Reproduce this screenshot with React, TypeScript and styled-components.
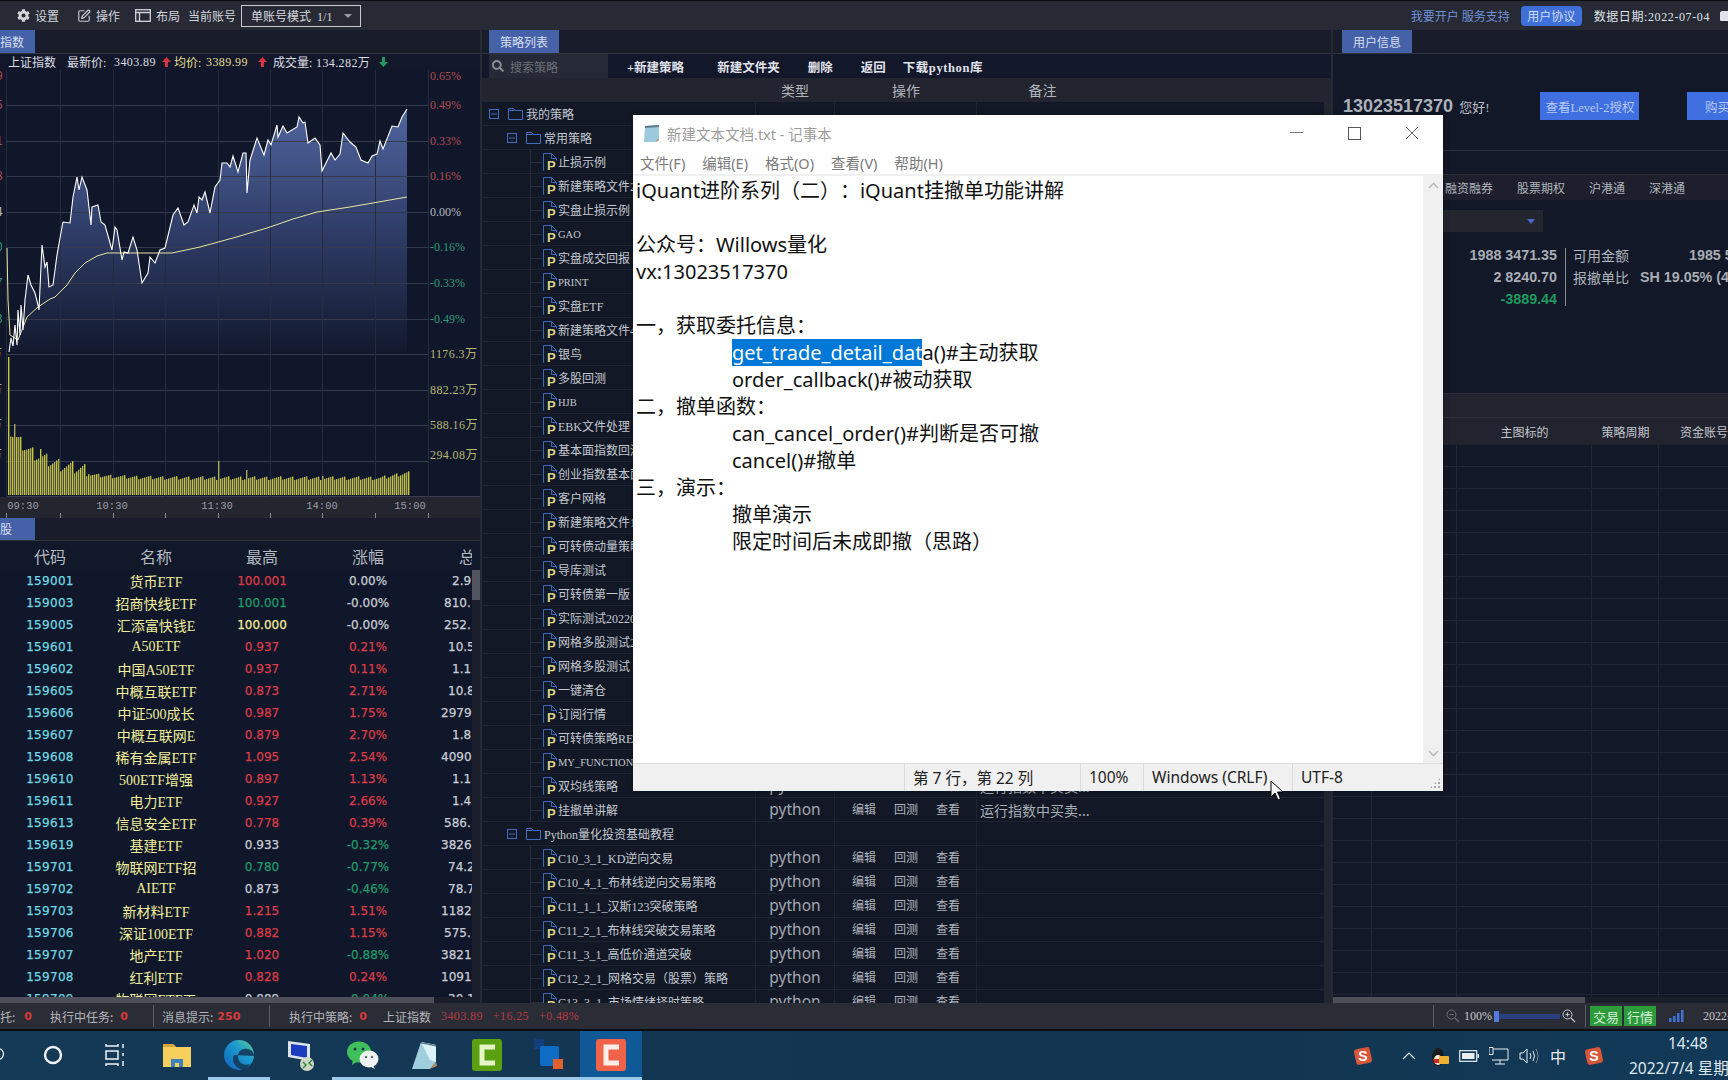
import React from 'react';
import styled, { createGlobalStyle } from 'styled-components';
import { FaCog, FaSearch } from 'react-icons/fa';
import { SquarePen } from 'lucide-react';

const SIM = '"Liberation Serif","Noto Sans CJK SC",serif';
const UI = '"Noto Sans","Noto Sans CJK SC",sans-serif';
const NUM = '"DejaVu Sans","Noto Sans CJK SC",sans-serif';

const Global = createGlobalStyle`
  html, body { margin: 0; padding: 0; background: #12182a; overflow: hidden; }
  * { box-sizing: border-box; text-spacing-trim: space-all; }
`;

const Root = styled.div`
  position: relative; width: 1728px; height: 1080px; overflow: hidden;
  display: flex; flex-direction: column; background: #262a35;
  font-family: ${SIM}; font-size: 12px; color: #d4d6dc;
`;

/* ---------- top bar ---------- */
const TopBar = styled.header`
  height: 30px; flex: none; display: flex; align-items: center; background: #272a35;
  border-top: 1px solid #0c0e14; color: #d2d4da; font-size: 12px;
`;
const TopItem = styled.span<{ $ml: number }>`
  display: inline-flex; align-items: center; gap: 5px; margin-left: ${p => p.$ml}px; white-space: nowrap;
`;
const AccountSelect = styled.div`
  margin-left: 5px; width: 120px; height: 22px; border: 1px solid #c8cad0; display: flex; align-items: center;
  padding: 0 8px 0 9px; justify-content: space-between; color: #d6d8dd;
`;
const Caret = styled.i`
  width: 0; height: 0; border-left: 4px solid transparent; border-right: 4px solid transparent; border-top: 4px solid #9a9ca4;
`;
const TopRight = styled.div`
  margin-left: auto; display: flex; align-items: center; white-space: nowrap; margin-right: 5px;
`;
const TopLink = styled.span` color: #6f92d8; `;
const Pill = styled.span`
  margin-left: 11px; width: 61px; height: 20px; border-radius: 4px; background: #3f6fd8; color: #cfdcf6;
  display: flex; align-items: center; justify-content: center;
`;
const DataDate = styled.span` margin-left: 12px; color: #dfe1e6; letter-spacing: .6px; `;
const Shirt = styled.span` margin-left: 10px; width: 12px; height: 10px; display: inline-block; background: #dfe3ea; border-radius: 2px 2px 1px 1px; margin-right: -9px; `;

/* ---------- main ---------- */
const Main = styled.main` flex: none; height: 973px; display: flex; gap: 2px; overflow: hidden; `;
const LeftPanel = styled.section` width: 480px; flex: none; display: flex; flex-direction: column; background: #11172a; overflow: hidden; `;
const MidPanel = styled.section` width: 849px; flex: none; display: flex; flex-direction: column; background: #121826; overflow: hidden; position: relative; `;
const RightPanel = styled.section` flex: 1; min-width: 0; display: flex; flex-direction: column; background: #121828; overflow: hidden; `;

const TabBar = styled.div<{ $pl?: number; $h?: number }>`
  height: ${p => p.$h ?? 24}px; flex: none; display: flex; background: #191d2b; border-bottom: 1px solid #30343f; padding-left: ${p => p.$pl ?? 0}px;
`;
const Tab = styled.div<{ $w?: number; $left?: boolean }>`
  width: ${p => p.$w ?? 70}px; background: #4562a8; color: #d8dff0; display: flex; align-items: center; font-size: 12px;
  justify-content: ${p => (p.$left ? 'flex-start' : 'center')};
`;

/* chart header */
const ChartHead = styled.div`
  height: 16px; flex: none; display: flex; align-items: center; padding-left: 8px; background: #12172a; white-space: nowrap; color: #dcdde2;
`;
const HeadSpan = styled.span<{ $w: number; $c?: string; $num?: boolean }>`
  width: ${p => p.$w}px; flex: none; color: ${p => p.$c ?? '#dcdde2'}; letter-spacing: ${p => (p.$num ? 0.4 : 0)}px;
`;
const ChartSvg = styled.svg` display: block; flex: none; `;

/* left table */
const TableHead = styled.div`
  height: 29px; flex: none; display: grid; grid-template-columns: 103px 106px 106px 106px 124px; align-items: center; padding-top: 1px;
  font-size: 16px; font-family: "Noto Sans CJK SC", sans-serif; color: #b4b8c0; background: #11182a; overflow: hidden; text-align: center; width: 472px;
`;
const HeadBand = styled.div` flex: none; background: #11182a; `;
const HeadCell = styled.span<{ $first?: boolean }>` padding-right: ${p => (p.$first ? 3 : 0)}px; white-space: nowrap; `;
const TableWrap = styled.div` flex: 1; min-height: 0; display: flex; background: #10172a; `;
const TableRows = styled.div` width: 472px; flex: none; overflow: hidden; `;
const VBar = styled.div` flex: 1; background: #1a1e2b; `;
const VThumb = styled.div` height: 30px; background: #52555f; `;
const Row = styled.div`
  height: 22px; display: grid; grid-template-columns: 103px 106px 106px 106px 106px; align-items: center; text-align: center; white-space: nowrap;
`;
const CodeCell = styled.span` color: #6fd8e2; font: 12px ${NUM}; letter-spacing: .3px; padding-right: 3px; -webkit-text-stroke: .25px currentColor; `;
const NameCell = styled.span` color: #f1ef9d; font: 14px ${SIM}; `;
const ValCell = styled.span<{ $c: string }>` color: ${p => p.$c}; font: 12px ${NUM}; -webkit-text-stroke: .25px currentColor; `;
const TotalCell = styled.span<{ $pl: number }>` color: #c8ccd4; font: 12px ${NUM}; -webkit-text-stroke: .25px currentColor; text-align: left; padding-left: ${p => p.$pl}px; `;
const HScroll = styled.div<{ $thumb: number }>` height: 6px; flex: none; background: #1a1e2b; &::before { content: ''; display: block; height: 100%; width: ${p => p.$thumb}px; background: #4d4f59; } `;

/* middle */
const Toolbar = styled.div` height: 24px; flex: none; display: flex; align-items: center; background: #12172a; `;
const Search = styled.div`
  margin-left: 7px; width: 119px; height: 24px; background: #262a36; display: flex; align-items: center; gap: 6px; padding-left: 3px; color: #6c7079; font-family: "Noto Sans CJK SC", sans-serif;
`;
const ToolBtn = styled.span<{ $ml: number; $sp?: number }>`
  margin-left: ${p => p.$ml}px; color: #e0e2ea; font-weight: 700; font-size: 12.5px; white-space: nowrap; letter-spacing: ${p => p.$sp ?? 0}px;
`;
const MidHead = styled.div`
  height: 24px; flex: none; display: grid; grid-template-columns: 273px 80px 142px 131px; background: #22252f; color: #b0b4bc; font-size: 14px; align-items: center; text-align: center; font-family: "Noto Sans CJK SC", sans-serif;
`;
const MidBody = styled.div` flex: 1; min-height: 0; display: flex; `;
const Tree = styled.div` width: 842px; flex: none; overflow: hidden; `;
const MidScroll = styled.div` flex: 1; background: #23262f; `;
const TreeRow = styled.div`
  height: 24px; display: grid; grid-template-columns: 273px 80px 142px 131px; border-bottom: 1px solid #1e2433; align-items: center;
`;
const NameCol = styled.div<{ $pl: number }>`
  height: 100%; display: flex; align-items: center; padding-left: ${p => p.$pl}px; overflow: hidden; white-space: nowrap; color: #c4c8d0; font-size: 12px;
`;
const NameText = styled.span<{ $latin: boolean }>` font-size: ${p => (p.$latin ? 10.5 : 12)}px; `;
const Branch = styled.span`
  width: 13px; height: 24px; flex: none; border-left: 1px solid #272d3c; background: linear-gradient(#272d3c,#272d3c) 0 50% / 100% 1px no-repeat;
`;
const TypeCol = styled.div`
  height: 100%; border-left: 1px solid #1e2433; border-right: 1px solid #1e2433; display: flex; align-items: center; justify-content: center; color: #a4a8b0; font: 15.5px ${UI}; padding-bottom: 2px;
`;
const OpCol = styled.div`
  height: 100%; border-right: 1px solid #1e2433; display: flex; align-items: center; padding-left: 17px; gap: 18px; color: #b0b4bc; font: 12px "Noto Sans CJK SC", sans-serif; padding-bottom: 4px;
`;
const NoteCol = styled.div` height: 100%; display: flex; align-items: center; padding-left: 3px; color: #a8acb4; font: 14px "Noto Sans CJK SC", sans-serif; white-space: nowrap; overflow: hidden; `;

/* right */
const UserRow = styled.div` height: 97px; flex: none; display: flex; align-items: center; padding-left: 10px; border-bottom: 1px solid #2a2e3a; white-space: nowrap; padding-top: 8px; `;
const UserId = styled.span` font: 700 18px "Liberation Sans", sans-serif; color: #aeb2ba; `;
const Hello = styled.span` margin-left: 6px; color: #b8bcc4; font-size: 13px; `;
const BlueBtn = styled.span<{ $ml: number; $w: number }>`
  margin-left: ${p => p.$ml}px; width: ${p => p.$w}px; height: 28px; flex: none; background: #3f6fe0; color: #b7c9f2; display: flex; align-items: center; justify-content: center; font-size: 12.5px;
`;
const Band = styled.div` height: 23px; flex: none; `;
const MarketTabs = styled.div` height: 26px; flex: none; display: flex; align-items: center; gap: 24px; padding-left: 112px; background: #1d202c; color: #b0b4bc; border-top: 1px solid #2a2e3a; font-family: "Noto Sans CJK SC", sans-serif; `;
const SelectBox = styled.div`
  margin-top: 10px; width: 210px; height: 22px; flex: none; background: #23262f; display: flex; align-items: center; justify-content: flex-end; padding-right: 8px;
`;
const BlueCaret = styled.i` width: 0; height: 0; border-left: 4px solid transparent; border-right: 4px solid transparent; border-top: 5px solid #4a6ad0; `;
const Stats = styled.div` margin-top: 16px; height: 58px; flex: none; display: flex; white-space: nowrap; `;
const StatCol = styled.div`
  width: 224px; flex: none; margin-top: -4px; display: flex; flex-direction: column; align-items: flex-end; justify-content: flex-start; font: 700 14.3px/22px "Liberation Sans", sans-serif; color: #a8acb4;
`;
const StatGreen = styled.span` color: #1f9a5e; `;
const StatDiv = styled.div` width: 1px; margin-left: 8px; background: #8a8d95; flex: none; `;
const StatRight = styled.div` margin-left: 7px; margin-top: -4px; font-size: 14px; line-height: 22px; color: #b0b4bc; font-family: "Noto Sans CJK SC", sans-serif; `;
const StatLine = styled.div` display: flex; `;
const StatValue = styled.span<{ $pl: number }>` padding-left: ${p => p.$pl}px; font: 700 14.3px/22px "Liberation Sans", sans-serif; color: #a8acb4; flex: none; `;
const Spacer = styled.div` flex: 1; min-height: 0; `;
const StratBar = styled.div` height: 25px; flex: none; background: #21242f; border-top: 1px solid #2d303b; border-bottom: 1px solid #2d303b; `;
const StratHead = styled.div`
  height: 27px; flex: none; display: grid; grid-template-columns: 39px 85px 135px 67px 90px; align-items: center; text-align: center; background: #21242f; color: #c4c7ce; font-family: "Noto Sans CJK SC", sans-serif;
`;
const StratGrid = styled.div` height: 552px; flex: none; overflow: hidden; `;
const StratRow = styled.div` height: 22px; display: grid; grid-template-columns: 39px 85px 135px 67px 90px; border-bottom: 1px solid #232735; `;
const StratCell = styled.span` border-right: 1px solid #232735; `;

/* status bar */
const StatusBar = styled.footer`
  height: 26px; flex: none; display: flex; align-items: center; background: #2b2d36; white-space: nowrap; color: #b4b6bc; font-family: "Noto Sans CJK SC", sans-serif;
`;
const StatusSec = styled.div<{ $w: number }>` width: ${p => p.$w}px; height: 22px; flex: none; display: flex; align-items: center; border-right: 1px solid #5a5c64; `;
const StatusText = styled.span<{ $ml?: number }>` margin-left: ${p => p.$ml ?? 0}px; `;
const RedNum = styled.span<{ $ml?: number }>` margin-left: ${p => p.$ml ?? 0}px; color: #d83a3a; font: 700 11px ${NUM}; `;
const RedThin = styled.span<{ $ml?: number }>` margin-left: ${p => p.$ml ?? 0}px; color: #b83a42; font: 12px ${SIM}; letter-spacing: .4px; `;
const StatusRight = styled.div` margin-left: auto; display: flex; align-items: center; height: 22px; `;
const Zoomer = styled.div` width: 153px; height: 22px; border-left: 1px solid #5a5c64; border-right: 1px solid #5a5c64; display: flex; align-items: center; padding-left: 12px; color: #c4c6cc; font-family: ${SIM}; `;
const Slider = styled.div` width: 66px; height: 5px; margin: 0 2px; background: #2a3f80; position: relative; `;
const SliderKnob = styled.i` position: absolute; left: 0; top: -3px; width: 5px; height: 11px; background: #5578dc; `;
const Badge = styled.span<{ $ml: number }>` margin-left: ${p => p.$ml}px; width: 32px; height: 20px; background: #2d9a3c; color: #d4f0d8; display: flex; align-items: center; justify-content: center; font-size: 13px; font-family: "Noto Sans CJK SC", sans-serif; `;
const StatusDate = styled.span` margin-left: 19px; width: 25px; overflow: hidden; color: #c4c6cc; font-family: ${SIM}; `;

/* taskbar */
const Taskbar = styled.nav`
  flex: 1; display: flex; align-items: stretch; background: linear-gradient(90deg,#143a58,#12344f 60%,#123a58); border-top: 2px solid #0b0d12; overflow: hidden; margin-left: 0;
`;
const Slot = styled.div<{ $open?: boolean; $active?: boolean }>`
  width: 62px; flex: none; display: flex; align-items: center; justify-content: center; padding-top: 2px;
  background: ${p => (p.$active ? '#0f5a96' : 'transparent')};
  border-bottom: 3px solid ${p => (p.$open ? '#9cc8ea' : 'transparent')};
`;
const Slots = styled.div` display: flex; margin-left: -40px; `;
const Tray = styled.div` margin-left: auto; display: flex; align-items: center; `;
const TrayItem = styled.div<{ $w: number }>` width: ${p => p.$w}px; display: flex; align-items: center; justify-content: center; color: #e8edf2; font: 16px "Noto Sans CJK SC", sans-serif; `;
const Clock = styled.div` width: 113px; padding-left: 14px; color: #dfe8f0; font: 15.5px/25px ${UI}; white-space: nowrap; `;
const ClockTime = styled.div` margin-left: 39px; `;

/* notepad */
const Notepad = styled.div`
  position: absolute; left: 633px; top: 115px; width: 810px; height: 676px; background: #fff; display: flex; flex-direction: column; color: #111;
  font-family: ${UI}; box-shadow: 0 0 6px rgba(0,0,0,.3);
`;
const NpTitle = styled.div` height: 36px; flex: none; display: flex; align-items: center; padding-left: 9px; gap: 5px; color: #9c9c9c; font-size: 14.5px; `;
const WinBtns = styled.div` margin-left: auto; margin-right: 2px; display: flex; align-items: center; `;
const WinBtn = styled.span` width: 58px; height: 36px; display: flex; align-items: center; justify-content: center; `;
const NpMenu = styled.div` height: 25px; flex: none; display: flex; gap: 17px; padding-left: 7px; align-items: center; color: #7a7a7a; font-size: 14.5px; border-bottom: 2px solid #f0f0f0; `;
const NpBody = styled.div` flex: 1; min-height: 0; display: flex; `;
const NpText = styled.div` flex: 1; padding: 1px 0 0 3px; font-size: 20px; line-height: 27px; white-space: pre; overflow: hidden; `;
const NpLine = styled.div<{ $indent?: boolean }>` height: 27px; padding-left: ${p => (p.$indent ? 96 : 0)}px; `;
const Sel = styled.span` background: #0078d7; color: #fff; `;
const NpScroll = styled.div` width: 20px; flex: none; background: #f0f0f0; display: flex; flex-direction: column; align-items: center; justify-content: space-between; padding: 6px 0; `;
const NpStatus = styled.div` height: 28px; flex: none; display: flex; background: #f0f0f0; border-top: 1px solid #dcdcdc; font-size: 15.5px; color: #222; align-items: center; `;
const NpCell = styled.span<{ $w: number }>` width: ${p => p.$w}px; height: 100%; flex: none; border-left: 1px solid #dcdcdc; display: flex; align-items: center; padding-left: 8px; padding-bottom: 1px; white-space: nowrap; &:first-of-type { padding-left: 13px; } `;
const Blank = styled.span` width: 271px; flex: none; `;
const Grip = styled.span` margin-left: auto; margin-right: 2px; align-self: flex-end; margin-bottom: 2px; width: 12px; height: 12px; background: radial-gradient(circle, #a8a8a8 1px, transparent 1.2px) 0 0 / 4px 4px; clip-path: polygon(100% 0,100% 100%,0 100%); `;
const Cursor = styled.svg` position: absolute; left: 1270px; top: 780px; `;

/* ---------- data ---------- */
const price: [number, number][] = [[9,352],[11,338],[13,346],[15,325],[17,345],[18,310],[20,335],[21,305],[23,330],[25,300],[28,275],[31,285],[35,293],[38,305],[39,310],[42,245],[45,267],[47,262],[49,287],[53,285],[57,255],[62,227],[63,222],[70,223],[73,197],[77,177],[79,190],[82,177],[87,190],[91,225],[92,207],[98,205],[101,222],[105,225],[112,250],[115,227],[117,230],[122,260],[124,252],[128,253],[133,237],[137,250],[142,283],[148,273],[150,257],[155,263],[160,250],[165,248],[173,215],[178,208],[184,225],[188,222],[194,205],[197,213],[199,197],[202,200],[205,192],[210,213],[215,187],[220,180],[222,163],[227,163],[230,167],[233,156],[238,172],[243,153],[246,153],[247,193],[250,160],[257,138],[264,155],[268,140],[271,145],[277,125],[278,137],[283,126],[287,133],[297,127],[299,117],[303,123],[305,122],[308,143],[315,138],[320,145],[322,171],[331,153],[335,160],[340,154],[343,133],[350,142],[356,147],[361,160],[368,163],[372,156],[377,154],[380,141],[383,149],[392,126],[398,127],[402,117],[407,109]];
const avg: [number, number][] = [[7,248],[8,300],[10,335],[18,340],[27,317],[38,307],[50,299],[55,297],[67,285],[75,273],[85,263],[97,256],[107,253],[140,253],[172,253],[200,247],[233,238],[267,228],[293,219],[317,212],[350,207],[407,197]];
const pts = (a: [number, number][]) => a.map(p => p.join(',')).join(' ');
const vols = Array.from({ length: 201 }, (_, i) => {
  const x = 8 + i * 2;
  const noise = ((i * 7919) % 13) / 13;
  let h = 15 + 44 * Math.exp(-(x - 8) / 32) + noise * (x < 90 ? 14 : 4);
  if (i === 0) h = 138;
  if (x === 14) h = 71;
  if (x === 40) h = 46;
  if (x === 218) h = 34;
  if (x === 246) h = 25;
  if (x === 322) h = 19;
  if (x > 380) h += (x - 380) / 5;
  return { x, h };
});

const hLines = [105, 141, 176, 212, 247, 283, 319, 354, 390, 425, 461];
const vLines = [6, 60, 113, 165, 218, 270, 322, 375, 428];
const pctLabels: [number, string, string][] = [[76, '0.65%', '#b04a50'], [105, '0.49%', '#b04a50'], [141, '0.33%', '#b04a50'], [176, '0.16%', '#b04a50'], [212, '0.00%', '#b8bac0'], [247, '-0.16%', '#2f9a78'], [283, '-0.33%', '#2f9a78'], [319, '-0.49%', '#2f9a78']];
const volLabels: [number, string][] = [[354, '1176.3万'], [390, '882.23万'], [425, '588.16万'], [455, '294.08万']];
const edgeLabels: [number, string, string][] = [[76, '9', '#b04a50'], [105, '5', '#b04a50'], [141, '1', '#b04a50'], [176, '8', '#b04a50'], [212, '4', '#b8bac0'], [247, '0', '#2f9a78'], [283, '7', '#2f9a78'], [319, '3', '#2f9a78'], [354, '万', '#b4b470'], [390, '万', '#b4b470'], [425, '万', '#b4b470'], [455, '万', '#b4b470']];

const R = '#dc3c46', G = '#1f9a68', W = '#c8ccd4', Y = '#f0ec9c';
const rows: [string, string, string, string, string, string, string][] = [
  ['159001', '货币ETF', '100.001', R, '0.00%', W, '2.9'],
  ['159003', '招商快线ETF', '100.001', G, '-0.00%', W, '810.'],
  ['159005', '汇添富快钱E', '100.000', Y, '-0.00%', W, '252.'],
  ['159601', 'A50ETF', '0.937', R, '0.21%', R, '10.5'],
  ['159602', '中国A50ETF', '0.937', R, '0.11%', R, '1.1'],
  ['159605', '中概互联ETF', '0.873', R, '2.71%', R, '10.8'],
  ['159606', '中证500成长', '0.987', R, '1.75%', R, '2979'],
  ['159607', '中概互联网E', '0.879', R, '2.70%', R, '1.8'],
  ['159608', '稀有金属ETF', '1.095', R, '2.54%', R, '4090'],
  ['159610', '500ETF增强', '0.897', R, '1.13%', R, '1.1'],
  ['159611', '电力ETF', '0.927', R, '2.66%', R, '1.4'],
  ['159613', '信息安全ETF', '0.778', R, '0.39%', R, '586.'],
  ['159619', '基建ETF', '0.933', W, '-0.32%', G, '3826'],
  ['159701', '物联网ETF招', '0.780', G, '-0.77%', G, '74.2'],
  ['159702', 'AIETF', '0.873', W, '-0.46%', G, '78.7'],
  ['159703', '新材料ETF', '1.215', R, '1.51%', R, '1182'],
  ['159706', '深证100ETF', '0.882', R, '1.15%', R, '575.'],
  ['159707', '地产ETF', '1.020', R, '-0.88%', G, '3821'],
  ['159708', '红利ETF', '0.828', R, '0.24%', R, '1091'],
  ['159709', '物联网ETF工', '0.889', W, '-0.04%', G, '30.1'],
];
/* the last column's figures are centred on a point beyond the panel edge, so only their start shows */
const totalPad = (v: string) => (v.length === 3 ? 31 : /^\d{4}$/.test(v) ? 20 : v.endsWith('.') ? 23 : 27);

const common = ['止损示例', '新建策略文件2', '实盘止损示例', 'GAO', '实盘成交回报', 'PRINT', '实盘ETF', '新建策略文件4', '银鸟', '多股回测', 'HJB', 'EBK文件处理', '基本面指数回测', '创业指数基本面', '客户网格', '新建策略文件1', '可转债动量策略', '导库测试', '可转债第一版', '实际测试20220', '网格多股测试2', '网格多股测试', '一键清仓', '订阅行情', '可转债策略REM', 'MY_FUNCTION', '双均线策略', '挂撤单讲解'];
const tutorial = ['C10_3_1_KD逆向交易', 'C10_4_1_布林线逆向交易策略', 'C11_1_1_汉斯123突破策略', 'C11_2_1_布林线突破交易策略', 'C11_3_1_高低价通道突破', 'C12_2_1_网格交易（股票）策略', 'C13_3_1_市场情绪择时策略'];

/* ---------- icons ---------- */
const Minus = () => (
  <svg width="10" height="10" viewBox="0 0 10 10" style={{ flex: 'none' }}><rect x=".5" y=".5" width="9" height="9" fill="none" stroke="#3f6fc0" /><path d="M2 5h6" stroke="#3f6fc0" /></svg>
);
const Folder = () => (
  <svg width="15" height="13" viewBox="0 0 15 13" style={{ flex: 'none', margin: '0 3px 0 9px' }}><path d="M.5 12.5V1.5h5l1.5 2h7.5v9z M.5 3.5h6" fill="none" stroke="#3f6fc0" /></svg>
);
const PFile = () => (
  <svg width="15" height="18" viewBox="0 0 15 18" style={{ flex: 'none' }}>
    <path d="M1 17.5h-.5V.5h8l5 5v2 M8.5.5v5h5" fill="none" stroke="#3d68b8" />
    <text x="4" y="16.5" fill="#d8d48c" fontSize="13" fontWeight="700" fontFamily="Liberation Sans">P</text>
  </svg>
);
const LayoutIcon = () => (
  <svg width="16" height="13" viewBox="0 0 16 13"><rect x=".7" y=".7" width="14.6" height="11.6" fill="none" stroke="#d2d4da" strokeWidth="1.3" /><path d="M1 3.5h14M4.5 3.5v9" stroke="#d2d4da" strokeWidth="1.3" /></svg>
);
const Arrow = ({ c, down }: { c: string; down?: boolean }) => (
  <svg width="9" height="10" viewBox="0 0 9 10" style={{ flex: 'none', transform: down ? 'rotate(180deg)' : undefined }}><path d="M4.5 0 9 5H6v5H3V5H0z" fill={c} /></svg>
);
const Sogou = () => (
  <svg width="20" height="20" viewBox="0 0 20 20">
    <rect x="2" y="2" width="16" height="16" rx="3" fill="#d8563a" transform="rotate(-12 10 10)" />
    <text x="10" y="15" fontSize="14" fontWeight="700" fill="#fff" textAnchor="middle" fontFamily="Liberation Sans">S</text>
  </svg>
);
const ZoomGlass = ({ plus, c }: { plus?: boolean; c: string }) => (
  <svg width="14" height="14" viewBox="0 0 14 14" style={{ flex: 'none' }}><circle cx="5.5" cy="5.5" r="4.5" fill="none" stroke={c} /><path d={plus ? 'M3.5 5.5h4M5.5 3.5v4M9 9l4 4' : 'M3.5 5.5h4M9 9l4 4'} stroke={c} strokeWidth="1.2" /></svg>
);

const Chart = () => (
  <ChartSvg width={480} height={448} viewBox="0 70 480 448">
    <defs>
      <linearGradient id="area" x1="0" y1="109" x2="0" y2="350" gradientUnits="userSpaceOnUse">
        <stop offset="0" stopColor="#50659f" />
        <stop offset=".5" stopColor="#2f3d68" />
        <stop offset="1" stopColor="#131a30" />
      </linearGradient>
    </defs>
    <rect x="0" y="70" width="480" height="448" fill="#11172a" />
    <rect x="0" y="497" width="480" height="21" fill="#23262f" />
    <polygon points={`9,352 ${pts(price)} 407,352`} fill="url(#area)" />
    {hLines.map(y => <line key={y} x1="6" x2="428" y1={y + .5} y2={y + .5} stroke="#363b4c" />)}
    <line x1="6" x2="480" y1="496.5" y2="496.5" stroke="#3a3f50" />
    {vLines.map(x => <line key={x} x1={x + .5} x2={x + .5} y1="70" y2="497" stroke="#262c3e" />)}
    {vols.map(v => <rect key={v.x} x={v.x} y={495 - v.h} width="1.4" height={v.h} fill={v.x % 4 === 0 ? '#c6c636' : '#a9a860'} />)}
    <polyline points={pts(avg)} fill="none" stroke="#e8e6a0" strokeWidth="1" />
    <polyline points={pts(price)} fill="none" stroke="#ffffff" strokeWidth="1.1" />
    <g fontFamily="Liberation Serif" fontSize="12">
      {pctLabels.map(([y, t, c]) => <text key={t} x="430" y={y + 4} fill={c}>{t}</text>)}
      {edgeLabels.map(([y, t, c], i) => <text key={i} x={t === '万' ? -10 : -4} y={y + 4} fill={c} fontFamily="Noto Sans CJK SC">{t}</text>)}
      {volLabels.map(([y, t]) => <text key={t} x="430" y={y + 4} fill="#b8b874" fontFamily='"Liberation Serif","Noto Sans CJK SC"' letterSpacing=".4">{t}</text>)}
      {[['09:30', 23], ['10:30', 112], ['11:30', 217], ['14:00', 322], ['15:00', 410]].map(([t, x]) => (
        <text key={t as string} x={x as number} y="509" fill="#9a9ca4" textAnchor="middle" fontFamily="Liberation Mono" fontSize="10.5">{t}</text>
      ))}
    </g>
    {[6, 60, 113, 165, 218, 270, 322, 375, 428].map(x => <line key={x} x1={x + .5} x2={x + .5} y1="513" y2="518" stroke="#888" />)}
  </ChartSvg>
);

const taskIcons = [
  { k: 'search', el: <svg width="16" height="16" viewBox="0 0 16 16" style={{ marginLeft: 14 }}><circle cx="8" cy="7" r="5.5" fill="none" stroke="#e8edf2" strokeWidth="1.3" /></svg> },
  { k: 'cortana', el: <svg width="20" height="20" viewBox="0 0 20 20"><circle cx="10" cy="10" r="8" fill="none" stroke="#eef2f6" strokeWidth="2.4" /></svg> },
  { k: 'view', el: <svg width="22" height="24" viewBox="0 0 22 24"><path d="M2 1v2h12V1M2 8h12v8H2zM2 23v-2h12v2M19 1v4M19 10v3M19 18v5" fill="none" stroke="#eef2f6" strokeWidth="1.5" /></svg> },
  { k: 'folder', el: <svg width="30" height="28" viewBox="0 0 30 28"><path d="M1 3h10l3 3h15v20H1z" fill="#f6cf5c" /><path d="M1 3h10l3 3H1z" fill="#d8a63a" /><path d="M9 18h12v8H9z" fill="#3d83b8" /><path d="M13 22h4v4h-4z" fill="#f6cf5c" /></svg> },
  { k: 'edge', open: true, el: <svg width="32" height="32" viewBox="0 0 32 32"><defs><linearGradient id="edge" x1="0" y1="1" x2="1" y2="0"><stop offset="0" stopColor="#0d62b8" /><stop offset=".6" stopColor="#1c9ad0" /><stop offset="1" stopColor="#5fd28a" /></linearGradient></defs><circle cx="16" cy="16" r="15" fill="url(#edge)" /><path d="M31 17c0-5-5-8-10-7-5 1-7 5-6 9 1 5 6 8 12 6l-4 5c-3 1-7 0-9-2-4-3-5-8-3-12" fill="#123a58" opacity=".9" /></svg> },
  { k: 'remote', el: <svg width="30" height="32" viewBox="0 0 30 32"><path d="M2 2l22 3v17L2 18z" fill="#e0e4ea" /><path d="M5 5l16 2v12L5 16z" fill="#1a3cc0" /><circle cx="21" cy="25" r="7" fill="#cfd6c8" /><path d="M17 23l3 3-3 3M26 21l-3 3 3 3" stroke="#2e8a3a" strokeWidth="1.5" fill="none" /></svg> },
  { k: 'wechat', open: true, el: <svg width="32" height="28" viewBox="0 0 32 28"><ellipse cx="12" cy="11" rx="12" ry="10.5" fill="#3fc05a" /><path d="M6 18l-1 6 6-4z" fill="#3fc05a" /><ellipse cx="22" cy="18" rx="9.5" ry="8.5" fill="#eef2f0" /><path d="M26 24l2 4-6-3z" fill="#eef2f0" /><circle cx="8" cy="8" r="1.5" fill="#143a58" /><circle cx="16" cy="8" r="1.5" fill="#143a58" /><circle cx="19" cy="16" r="1.2" fill="#5a6a70" /><circle cx="25" cy="16" r="1.2" fill="#5a6a70" /></svg> },
  { k: 'notepad', open: true, el: <svg width="28" height="30" viewBox="0 0 28 30"><path d="M10 2l15 3v17l-6 7H1z" fill="#9fcfdc" /><path d="M10 2l15 3v17l-6-2z" fill="#dcf2f8" /><path d="M10 2l15 3v1.5L10 3.5z" fill="#5a7a8a" /><path d="M25 22l-6 7 7-3z" fill="#b88a60" /></svg> },
  { k: 'cam', open: true, el: <svg width="30" height="32" viewBox="0 0 30 32"><rect width="30" height="32" rx="3" fill="#5aa010" /><path d="M23 8H10v16h13" fill="none" stroke="#e6f6c8" strokeWidth="5" /></svg> },
  { k: 'blue', open: true, el: <svg width="30" height="32" viewBox="0 0 30 32"><rect x="0" y="0" width="10" height="10" fill="#123f7a" /><rect x="6" y="7" width="19" height="20" rx="2" fill="#0e6cc4" /><rect x="19" y="20" width="10" height="10" fill="#e0602e" /></svg> },
  { k: 'camr', open: true, active: true, el: <svg width="30" height="32" viewBox="0 0 30 32"><rect width="30" height="32" rx="3" fill="#f0624a" /><path d="M23 8H10v16h13" fill="none" stroke="#fbeee8" strokeWidth="5" /></svg> },
];

const lines: { t?: React.ReactNode; i?: boolean }[] = [
  { t: 'iQuant进阶系列（二）：iQuant挂撤单功能讲解' }, {}, { t: '公众号：Willows量化' }, { t: 'vx:13023517370' }, {},
  { t: '一，获取委托信息：' },
  { t: <><Sel>get_trade_detail_dat</Sel>a()#主动获取</>, i: true },
  { t: 'order_callback()#被动获取', i: true },
  { t: '二，撤单函数：' },
  { t: 'can_cancel_order()#判断是否可撤', i: true },
  { t: 'cancel()#撤单', i: true },
  { t: '三，演示：' },
  { t: '撤单演示', i: true },
  { t: '限定时间后未成即撤（思路）', i: true },
];

const StratCells = () => <><StratCell /><StratCell /><StratCell /><StratCell /><StratCell /></>;

const FileRow = ({ name, note }: { name: string; note?: string }) => (
  <TreeRow>
    <NameCol $pl={48}><Branch /><PFile /><NameText $latin={/^[A-Z_]+$/.test(name)}>{name}</NameText></NameCol>
    <TypeCol>python</TypeCol>
    <OpCol><span>编辑</span><span>回测</span><span>查看</span></OpCol>
    <NoteCol>{note}</NoteCol>
  </TreeRow>
);
const FolderRow = ({ name, pl }: { name: string; pl: number }) => (
  <TreeRow>
    <NameCol $pl={pl}><Minus /><Folder /><span>{name}</span></NameCol>
    <TypeCol /><OpCol /><NoteCol />
  </TreeRow>
);

export default function App() {
  return (
    <Root>
      <Global />
      <TopBar>
        <TopItem $ml={17}><FaCog size={13} color="#d2d4da" />设置</TopItem>
        <TopItem $ml={18}><SquarePen size={14} color="#c8cad0" />操作</TopItem>
        <TopItem $ml={15}><LayoutIcon />布局</TopItem>
        <TopItem $ml={8}>当前账号</TopItem>
        <AccountSelect>单账号模式&nbsp; 1/1<Caret /></AccountSelect>
        <TopRight>
          <TopLink>我要开户 服务支持</TopLink>
          <Pill>用户协议</Pill>
          <DataDate>数据日期:2022-07-04</DataDate>
          <Shirt />
        </TopRight>
      </TopBar>
      <Main>
        <LeftPanel>
          <TabBar><Tab $w={35} $left>指数</Tab></TabBar>
          <ChartHead>
            <HeadSpan $w={59}>上证指数</HeadSpan>
            <HeadSpan $w={47}>最新价:</HeadSpan>
            <HeadSpan $w={48} $num>3403.89</HeadSpan>
            <Arrow c="#d8303c" />
            <HeadSpan $w={35} $c="#e0dc90">&nbsp;均价:</HeadSpan>
            <HeadSpan $w={52} $c="#e0dc90" $num>3389.99</HeadSpan>
            <Arrow c="#d8303c" />
            <HeadSpan $w={49}>&nbsp;&nbsp;成交量:</HeadSpan>
            <HeadSpan $w={63} $num>134.282万</HeadSpan>
            <Arrow c="#1f9a60" down />
          </ChartHead>
          <Chart />
          <TabBar $h={23}><Tab $w={35} $left>股</Tab></TabBar>
          <HeadBand>
            <TableHead>
              <HeadCell $first>代码</HeadCell><HeadCell>名称</HeadCell><HeadCell>最高</HeadCell><HeadCell>涨幅</HeadCell><HeadCell>总金额</HeadCell>
            </TableHead>
          </HeadBand>
          <TableWrap>
            <TableRows>
              {rows.map(r => (
                <Row key={r[0]}>
                  <CodeCell>{r[0]}</CodeCell>
                  <NameCell>{r[1]}</NameCell>
                  <ValCell $c={r[3]}>{r[2]}</ValCell>
                  <ValCell $c={r[5]}>{r[4]}</ValCell>
                  <TotalCell $pl={totalPad(r[6])}>{r[6]}</TotalCell>
                </Row>
              ))}
            </TableRows>
            <VBar><VThumb /></VBar>
          </TableWrap>
          <HScroll $thumb={434} />
        </LeftPanel>

        <MidPanel>
          <TabBar $pl={7}><Tab>策略列表</Tab></TabBar>
          <Toolbar>
            <Search><FaSearch size={12} color="#8a8e96" />搜索策略</Search>
            <ToolBtn $ml={19}>+新建策略</ToolBtn>
            <ToolBtn $ml={33}>新建文件夹</ToolBtn>
            <ToolBtn $ml={28}>删除</ToolBtn>
            <ToolBtn $ml={28}>返回</ToolBtn>
            <ToolBtn $ml={17} $sp={0.6}>下载python库</ToolBtn>
          </Toolbar>
          <MidHead><span /><span>类型</span><span>操作</span><span>备注</span></MidHead>
          <MidBody>
            <Tree>
              <FolderRow name="我的策略" pl={7} />
              <FolderRow name="常用策略" pl={25} />
              {common.map((n, i) => <FileRow key={n + i} name={n} note={i >= 26 ? '运行指数中买卖...' : undefined} />)}
              <FolderRow name="Python量化投资基础教程" pl={25} />
              {tutorial.map(n => <FileRow key={n} name={n} />)}
            </Tree>
            <MidScroll />
          </MidBody>
        </MidPanel>

        <RightPanel>
          <TabBar $pl={9}><Tab>用户信息</Tab></TabBar>
          <UserRow>
            <UserId>13023517370</UserId><Hello>您好!</Hello>
            <BlueBtn $ml={51} $w={99}>查看Level-2授权</BlueBtn>
            <BlueBtn $ml={48} $w={99}>购买Level-2</BlueBtn>
          </UserRow>
          <Band />
          <MarketTabs><span>融资融券</span><span>股票期权</span><span>沪港通</span><span>深港通</span></MarketTabs>
          <SelectBox><BlueCaret /></SelectBox>
          <Stats>
            <StatCol><span>1988 3471.35</span><span>2 8240.70</span><StatGreen>-3889.44</StatGreen></StatCol>
            <StatDiv />
            <StatRight>
              <StatLine>可用金额<StatValue $pl={60}>1985 5471.35</StatValue></StatLine>
              <StatLine>报撤单比<StatValue $pl={11}>SH 19.05% (4/21)</StatValue></StatLine>
            </StatRight>
          </Stats>
          <Spacer />
          <StratBar />
          <StratHead><span /><span /><span>主图标的</span><span>策略周期</span><span>资金账号</span></StratHead>
          <StratGrid>
            {Array.from({ length: 26 }, (_, i) => <StratRow key={i}><StratCells /></StratRow>)}
          </StratGrid>
          <HScroll $thumb={252} />
        </RightPanel>
      </Main>

      <StatusBar>
        <StatusSec $w={154}>
          <StatusText>托:</StatusText><RedNum $ml={9}>0</RedNum>
          <StatusText $ml={18}>执行中任务:</StatusText><RedNum $ml={7}>0</RedNum>
        </StatusSec>
        <StatusSec $w={116}>
          <StatusText $ml={8}>消息提示:</StatusText><RedNum $ml={4}>250</RedNum>
        </StatusSec>
        <StatusText $ml={19}>执行中策略:</StatusText><RedNum $ml={7}>0</RedNum>
        <StatusText $ml={16}>上证指数</StatusText>
        <RedThin $ml={10}>3403.89</RedThin>
        <RedThin $ml={10}>+16.25</RedThin>
        <RedThin $ml={10}>+0.48%</RedThin>
        <StatusRight>
          <Zoomer>
            <ZoomGlass c="#6a6c74" />
            <StatusText $ml={4}>100%</StatusText>
            <Slider><SliderKnob /></Slider>
            <ZoomGlass plus c="#c4c6cc" />
          </Zoomer>
          <Badge $ml={4}>交易</Badge>
          <Badge $ml={2}>行情</Badge>
          <svg width="15" height="12" viewBox="0 0 15 12" style={{ marginLeft: 13 }}>
            <rect x="0" y="8" width="2.5" height="4" fill="#3f6fd8" /><rect x="4" y="6" width="2.5" height="6" fill="#3f6fd8" /><rect x="8" y="3" width="2.5" height="9" fill="#3f6fd8" /><rect x="12" y="0" width="2.5" height="12" fill="#3f6fd8" />
          </svg>
          <StatusDate>2022-07</StatusDate>
        </StatusRight>
      </StatusBar>

      <Taskbar>
        <Slots>
          {taskIcons.map(t => <Slot key={t.k} $open={t.open} $active={t.active}>{t.el}</Slot>)}
        </Slots>
        <Tray>
          <TrayItem $w={63}><Sogou /></TrayItem>
          <TrayItem $w={30}><svg width="14" height="8" viewBox="0 0 14 8"><path d="M1 7l6-6 6 6" fill="none" stroke="#e8edf2" strokeWidth="1.2" /></svg></TrayItem>
          <TrayItem $w={30}>
            <svg width="20" height="22" viewBox="0 0 20 22"><ellipse cx="9" cy="12" rx="6" ry="9" fill="#1b1b1b" /><ellipse cx="9" cy="15" rx="4" ry="5" fill="#f0ece0" /><path d="M4 14h9l-1 4H5z" fill="#c82a2a" /><rect x="10" y="11" width="10" height="8" rx="1" fill="#f0b030" /></svg>
          </TrayItem>
          <TrayItem $w={30}>
            <svg width="20" height="12" viewBox="0 0 20 12"><rect x=".7" y=".7" width="17" height="10.6" fill="none" stroke="#e8edf2" strokeWidth="1.2" /><rect x="3" y="3" width="12.5" height="6" fill="#e8edf2" /><rect x="18.5" y="4" width="1.5" height="4" fill="#e8edf2" /></svg>
          </TrayItem>
          <TrayItem $w={30}>
            <svg width="20" height="18" viewBox="0 0 20 18"><path d="M4 2h15v11H3M11 13v4M6 17h10M0 .5h4v7H0z" fill="none" stroke="#e8edf2" /></svg>
          </TrayItem>
          <TrayItem $w={30}>
            <svg width="20" height="18" viewBox="0 0 20 18"><path d="M1 6h3l4-4v14l-4-4H1z" fill="none" stroke="#e8edf2" /><path d="M11 6q2 3 0 6M14 4q3 5 0 10" fill="none" stroke="#e8edf2" /><path d="M17 2q4 7 0 14" fill="none" stroke="#7a8a98" /></svg>
          </TrayItem>
          <TrayItem $w={28}>中</TrayItem>
          <TrayItem $w={43}><Sogou /></TrayItem>
          <Clock>
            <ClockTime>14:48</ClockTime>
            <div>2022/7/4 星期一</div>
          </Clock>
        </Tray>
      </Taskbar>

      <Notepad>
        <NpTitle>
          <svg width="20" height="20" viewBox="0 0 20 20"><path d="M3 3l14-1v15l-3 2H2z" fill="#9ccadc" /><path d="M3 3l14-1v2L3 5z" fill="#5a7a8a" /><path d="M14 19l3-2-2-1z" fill="#b88a60" /></svg>
          新建文本文档.txt - 记事本
          <WinBtns>
            <WinBtn><svg width="13" height="2"><rect width="13" height="1" fill="#777" /></svg></WinBtn>
            <WinBtn><svg width="13" height="13"><rect x=".5" y=".5" width="12" height="12" fill="none" stroke="#555" /></svg></WinBtn>
            <WinBtn><svg width="14" height="14" viewBox="0 0 14 14"><path d="M1 1l12 12M13 1L1 13" stroke="#666" /></svg></WinBtn>
          </WinBtns>
        </NpTitle>
        <NpMenu><span>文件(F)</span><span>编辑(E)</span><span>格式(O)</span><span>查看(V)</span><span>帮助(H)</span></NpMenu>
        <NpBody>
          <NpText>
            {lines.map((l, i) => <NpLine key={i} $indent={l.i}>{l.t}</NpLine>)}
          </NpText>
          <NpScroll>
            <svg width="11" height="7" viewBox="0 0 11 7"><path d="M1 6l4.5-4.5L10 6" fill="none" stroke="#bbb" strokeWidth="1.6" /></svg>
            <svg width="11" height="7" viewBox="0 0 11 7"><path d="M1 1l4.5 4.5L10 1" fill="none" stroke="#bbb" strokeWidth="1.6" /></svg>
          </NpScroll>
        </NpBody>
        <NpStatus>
          <Blank />
          <NpCell $w={176}>第 7 行，第 22 列</NpCell>
          <NpCell $w={63}>100%</NpCell>
          <NpCell $w={149}>Windows (CRLF)</NpCell>
          <NpCell $w={100}>UTF-8</NpCell>
          <Grip />
        </NpStatus>
      </Notepad>
      <Cursor width="14" height="21" viewBox="0 0 14 21"><path d="M1 1v16l4-4 3 7 2.5-1-3-7h5.5z" fill="#fff" stroke="#000" /></Cursor>
    </Root>
  );
}
